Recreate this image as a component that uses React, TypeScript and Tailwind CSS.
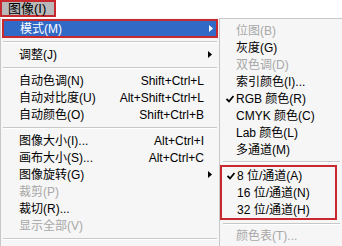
import React from "react";

type Item = {
  label?: string;
  shortcut?: string;
  sub?: boolean;
  disabled?: boolean;
  checked?: boolean;
  sep?: boolean;
};

const font = { fontFamily: '"Liberation Sans", "Noto Sans CJK SC", sans-serif' };

const Arrow = ({ white }: { white?: boolean }) => (
  <svg width="4" height="7" viewBox="0 0 4 7" className="shrink-0">
    <path d="M0 0 L4 3.5 L0 7 Z" fill={white ? "#ffffff" : "#000000"} />
  </svg>
);

const Check = () => (
  <svg width="8" height="8" viewBox="0 0 8 8">
    <path d="M0.5 4 L3 6.5 L7.5 1" stroke="#000" strokeWidth="1.8" fill="none" />
  </svg>
);

const mainItems: Item[] = [
  { label: "调整(J)", sub: true },
  { sep: true },
  { label: "自动色调(N)", shortcut: "Shift+Ctrl+L" },
  { label: "自动对比度(U)", shortcut: "Alt+Shift+Ctrl+L" },
  { label: "自动颜色(O)", shortcut: "Shift+Ctrl+B" },
  { sep: true },
  { label: "图像大小(I)...", shortcut: "Alt+Ctrl+I" },
  { label: "画布大小(S)...", shortcut: "Alt+Ctrl+C" },
  { label: "图像旋转(G)", sub: true },
  { label: "裁剪(P)", disabled: true },
  { label: "裁切(R)..." },
  { label: "显示全部(V)", disabled: true },
  { sep: true },
];

const modeItems: Item[] = [
  { label: "位图(B)", disabled: true },
  { label: "灰度(G)" },
  { label: "双色调(D)", disabled: true },
  { label: "索引颜色(I)..." },
  { label: "RGB 颜色(R)", checked: true },
  { label: "CMYK 颜色(C)" },
  { label: "Lab 颜色(L)" },
  { label: "多通道(M)" },
];

const Separator = ({ h = "h-[9px]" }: { h?: string }) => (
  <div className={`${h} flex flex-col justify-center px-[2px]`}>
    <div className="h-px bg-[#c8c8c8]" />
    <div className="h-px bg-white" />
  </div>
);

const MainRow = ({ item }: { item: Item }) => (
  <div
    className={`h-[17px] flex items-center pl-[18px] pr-[7px] text-[12px] leading-none ${
      item.disabled ? "text-[#a8a8a8]" : "text-black"
    }`}
  >
    <span className="flex-1">{item.label}</span>
    {item.shortcut && <span className="mr-[8px]">{item.shortcut}</span>}
    {item.sub && <Arrow />}
  </div>
);

const SubRow = ({ item }: { item: Item }) => (
  <div
    className={`h-[17px] flex items-center text-[12px] leading-none ${
      item.disabled ? "text-[#a8a8a8]" : "text-black"
    }`}
  >
    <span className="w-[14px] flex justify-end pr-[1px]">{item.checked && <Check />}</span>
    <span className="pl-[1px]">{item.label}</span>
  </div>
);

export default function App() {
  return (
    <div className="w-[342px] h-[246px] overflow-hidden bg-white relative" style={font}>
      {/* menu bar */}
      <div className="h-[18px] flex">
        <div className="w-[56px] h-[17px] bg-[#b9b9b9] border-2 border-[#c8282e] flex items-center pl-[6px] text-[13px] text-black leading-none">
          图像(I)
        </div>
      </div>

      <div className="flex">
        {/* main menu */}
        <div className="w-[219px] h-[228px] bg-[#f6f6f6] border-l border-[#c8c8c8] pt-px">
          <div className="h-[19px] mx-[1px] border-2 border-[#c8282e] bg-[#3169c6] flex items-center pl-[16px] pr-[3px] text-white text-[12px] leading-none">
            <span className="flex-1">模式(M)</span>
            <Arrow white />
          </div>
          <Separator h="h-[8px]" />
          {mainItems.map((item, i) =>
            item.sep ? <Separator key={i} /> : <MainRow key={i} item={item} />
          )}
        </div>

        {/* mode submenu */}
        <div className="flex-1 h-[228px] bg-[#f6f6f6] border-l border-t border-[#c8c8c8] pt-[3px] pl-[1px]">
          {modeItems.map((item, i) => (
            <SubRow key={i} item={item} />
          ))}
          <Separator h="h-[7px]" />
          <div className="border-2 border-[#c8282e] mr-[5px] -ml-px">
            <SubRow item={{ label: "8 位/通道(A)", checked: true }} />
            <SubRow item={{ label: "16 位/通道(N)" }} />
            <SubRow item={{ label: "32 位/通道(H)" }} />
          </div>
          <Separator h="h-[7px]" />
          <SubRow item={{ label: "颜色表(T)...", disabled: true }} />
        </div>
      </div>
    </div>
  );
}
